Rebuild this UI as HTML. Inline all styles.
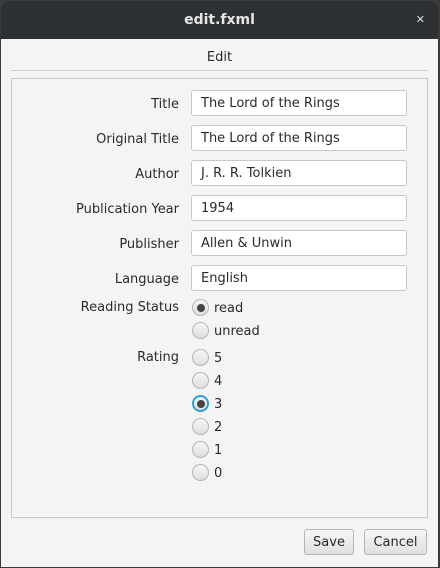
<!DOCTYPE html>
<html><head><meta charset="utf-8"><style>
*{box-sizing:border-box;margin:0;padding:0}
body{width:440px;height:568px;background:#3a3a3a;font-family:"DejaVu Sans","Liberation Sans",sans-serif;font-size:13px;color:#2a2a2a;position:relative;overflow:hidden}
.win{position:absolute;left:1px;top:1px;width:437px;height:566px;background:#f4f4f4;border-radius:6px 6px 0 0;overflow:hidden}
.tb{position:absolute;left:0;top:0;width:100%;height:38px;background:#2d3133;color:#e6e6e6;font-weight:bold;font-size:14px;text-align:center;line-height:38px}
.x{position:absolute;right:13px;top:0;font-weight:normal;font-size:11px;color:#ddd}
.a{position:absolute}
.lbl{position:absolute;right:259px;text-align:right;white-space:nowrap}
.f{position:absolute;left:190px;width:216px;height:26px;background:#fff;border:1px solid #c8c8c8;border-radius:3px;padding-left:9px;line-height:26px}
.r{position:absolute;left:191px;width:17px;height:17px;border-radius:50%;border:1px solid #b5b5b5;background:linear-gradient(#f6f6f6,#dedede)}
.r.on::after{content:"";position:absolute;left:3.5px;top:3.5px;width:8px;height:8px;border-radius:50%;background:#444}
.r.foc{border:2px solid #2aa2d8}
.r.foc::after{left:2.5px;top:2.5px}
.rt{position:absolute;left:213px}
.btn{position:absolute;top:528px;height:26px;border:1px solid #b5b5b5;border-radius:3px;background:linear-gradient(#f6f6f6,#e0e0e0);text-align:center;line-height:26px}
</style></head><body>
<div class="win">
<div class="tb">edit.fxml<span class="x">✕</span></div>
<div class="a" style="left:0;width:437px;top:49px;text-align:center">Edit</div>
<div class="a" style="left:10px;width:417px;top:69px;height:1px;background:#cfcfcf"></div>
<div class="a" style="left:10px;width:417px;top:77px;height:440px;border:1px solid #c8c8c8"></div>

<div class="lbl" style="top:96px">Title</div><div class="f" style="top:89px">The Lord of the Rings</div>
<div class="lbl" style="top:131px">Original Title</div><div class="f" style="top:124px">The Lord of the Rings</div>
<div class="lbl" style="top:166px">Author</div><div class="f" style="top:159px">J. R. R. Tolkien</div>
<div class="lbl" style="top:201px">Publication Year</div><div class="f" style="top:194px">1954</div>
<div class="lbl" style="top:236px">Publisher</div><div class="f" style="top:229px">Allen &amp; Unwin</div>
<div class="lbl" style="top:271px">Language</div><div class="f" style="top:264px">English</div>

<div class="lbl" style="top:299px">Reading Status</div>
<div class="r on" style="top:298px"></div><div class="rt" style="top:300px">read</div>
<div class="r" style="top:321px"></div><div class="rt" style="top:323px">unread</div>
<div class="lbl" style="top:349px">Rating</div>
<div class="r" style="top:348px"></div><div class="rt" style="top:350px">5</div>
<div class="r" style="top:371px"></div><div class="rt" style="top:373px">4</div>
<div class="r on foc" style="top:394px"></div><div class="rt" style="top:396px">3</div>
<div class="r" style="top:417px"></div><div class="rt" style="top:419px">2</div>
<div class="r" style="top:440px"></div><div class="rt" style="top:442px">1</div>
<div class="r" style="top:463px"></div><div class="rt" style="top:465px">0</div>

<div class="btn" style="left:303px;width:50px">Save</div>
<div class="btn" style="left:363px;width:63px">Cancel</div>
</div>
</body></html>
